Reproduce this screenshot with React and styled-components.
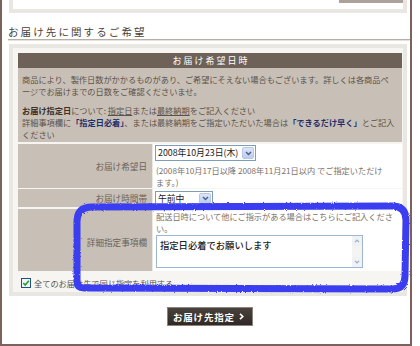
import React from 'react';
import styled, { createGlobalStyle } from 'styled-components';

const GlobalStyle = createGlobalStyle`
  html, body {
    margin: 0;
    padding: 0;
    background: #fff;
  }
  body {
    font-family: "Noto Sans CJK JP", "Noto Sans", sans-serif;
  }
`;

const Page = styled.div`
  position: relative;
  width: 420px;
  height: 346px;
  overflow: hidden;
`;

const Frame = styled.div`
  width: 412px;
  height: 346px;
  box-sizing: border-box;
  border: 2px solid #7b625c;
  border-top: none;
`;

const TopPanel = styled.div`
  margin-left: 7px;
  width: 398px;
  height: 13px;
  box-sizing: border-box;
  border: 4px solid #e9e7e2;
  border-top: none;
  display: flex;
  justify-content: flex-end;
  align-items: flex-start;
`;

const TopButton = styled.div`
  width: 64px;
  height: 3px;
  background: #aaa29b;
`;

const Heading = styled.h2`
  margin: 12px 0 0 6px;
  height: 14px;
  line-height: 14px;
  font-size: 10.5px;
  font-weight: normal;
  letter-spacing: 2.1px;
  color: #4b3f38;
  border-bottom: 1px solid #b7afa6;
  box-shadow: 0 1px 0 #e4e0da;
`;

const Panel = styled.div`
  margin: 4px 0 0 7px;
  width: 398px;
  height: 252px;
  box-sizing: border-box;
  border: 4px solid #e9e7e2;
  background: #f6f5f2;
  padding: 5px 0 0 5px;
`;

const Table = styled.div`
  width: 384px;
`;

const TableHead = styled.div`
  height: 15px;
  background: #6e6158;
  color: #fff;
  font-size: 9px;
  letter-spacing: 2px;
  line-height: 15px;
  text-align: center;
  padding-left: 2px;
`;

const Info = styled.div`
  height: 74px;
  box-sizing: border-box;
  background: #c8c0b6;
  padding: 5px 0 0 4px;
  font-size: 8.2px;
  line-height: 12px;
  color: #5b524b;
  white-space: nowrap;
`;

const Para = styled.p`
  margin: 0 0 ${(p) => p.$gap || 0}px;
`;

const Strong = styled.b`
  color: #3b302a;
`;

const Under = styled.span`
  text-decoration: underline;
  text-underline-offset: 1px;
`;

const Navy = styled.b`
  color: #1f2f6c;
`;

const Row = styled.div`
  display: grid;
  grid-template-columns: 134px 1fr;
  column-gap: 1px;
  margin-top: 2px;
  height: ${(p) => p.$h}px;
  background: #ebe7e1;
`;

const Label = styled.div`
  background: #c8c0b6;
  display: flex;
  justify-content: flex-end;
  align-items: ${(p) => (p.$top ? 'flex-start' : 'center')};
  padding: ${(p) => (p.$top ? `${p.$top}px 5px 0 0` : '0 5px 0 0')};
  font-size: 8.6px;
  color: #6b625a;
  white-space: nowrap;
`;

const Value = styled.div`
  background: #fff;
  padding: ${(p) => p.$pad || '0 0 0 2px'};
  overflow: visible;
`;

const Select = styled.div`
  display: flex;
  align-items: stretch;
  width: ${(p) => p.$w}px;
  height: ${(p) => p.$h}px;
  box-sizing: border-box;
  border: 1px solid #7f9db9;
  background: #fff;
  margin-top: ${(p) => p.$mt || 0}px;
`;

const SelectText = styled.span`
  flex: 1;
  padding-left: 2px;
  font-size: 8.8px;
  line-height: ${(p) => p.$lh}px;
  color: #1a1a1a;
  white-space: nowrap;
`;

const ArrowBox = styled.span`
  width: 12px;
  margin: 1px;
  box-sizing: border-box;
  border: 1px solid #b5c8ea;
  border-radius: 2px;
  background: linear-gradient(#dce6f8, #bccdf0);
  display: flex;
  align-items: center;
  justify-content: center;
`;

const Note = styled.div`
  margin-top: ${(p) => p.$mt || 0}px;
  padding-left: 1px;
  font-size: 8.2px;
  line-height: ${(p) => p.$lh || 12}px;
  color: #7a716a;
  white-space: nowrap;
`;

const TextBox = styled.div`
  display: flex;
  width: 207px;
  height: 33px;
  box-sizing: border-box;
  border: 1px solid #9fb6cf;
  margin: 1px 0 0 1px;
`;

const TextBody = styled.div`
  flex: 1;
  padding: 3px 0 0 3px;
  font-size: 9.3px;
  line-height: 12px;
  font-weight: 500;
  color: #222;
  white-space: nowrap;
`;

const ScrollBar = styled.div`
  width: 10px;
  background: #f4f4f2;
  display: flex;
  flex-direction: column;
  justify-content: space-between;
`;

const ScrollBtn = styled.span`
  height: 10px;
  display: flex;
  align-items: center;
  justify-content: center;
  background: #eef1f5;
`;

const CheckRow = styled.div`
  display: flex;
  align-items: center;
  gap: 3px;
  padding: 7px 0 0 3px;
  height: 10px;
  font-size: 8.2px;
  color: #5b524b;
  white-space: nowrap;
`;

const ButtonRow = styled.div`
  margin: 11px 0 0 16px;
  width: 384px;
  display: flex;
  justify-content: center;
`;

const Button = styled.button`
  width: 86px;
  height: 19px;
  box-sizing: border-box;
  border: 1px solid #8c837c;
  background: linear-gradient(#4a423c, #2f2925);
  color: #fff;
  font-family: inherit;
  font-size: 9.5px;
  font-weight: bold;
  letter-spacing: 0.8px;
  display: flex;
  align-items: center;
  justify-content: space-between;
  padding: 0 8px 0 5px;
  cursor: pointer;
`;

const Overlay = styled.svg`
  position: absolute;
  left: 0;
  top: 0;
  pointer-events: none;
`;

const Chevron = ({ up, color = '#4d6185', w = 7, h = 5 }) => (
  <svg width={w} height={h} viewBox="0 0 7 5">
    <path
      d={up ? 'M1 4 L3.5 1.5 L6 4' : 'M1 1 L3.5 3.5 L6 1'}
      fill="none"
      stroke={color}
      strokeWidth="1.5"
    />
  </svg>
);

const CheckIcon = () => (
  <svg width="10" height="10" viewBox="0 0 10 10">
    <rect x="0.5" y="0.5" width="9" height="9" fill="#f2f4f8" stroke="#1c5180" />
    <path d="M2.3 5 L4.2 7 L7.8 2.8" fill="none" stroke="#21a121" strokeWidth="1.6" />
  </svg>
);

const App = () => (
  <>
    <GlobalStyle />
    <Page>
      <Frame>
        <TopPanel>
          <TopButton />
        </TopPanel>
        <Heading>お届け先に関するご希望</Heading>
        <Panel>
          <Table>
            <TableHead>お届け希望日時</TableHead>
            <Info>
              <Para>商品により、製作日数がかかるものがあり、ご希望にそえない場合もございます。詳しくは各商品ペ</Para>
              <Para $gap={7}>ージでお届けまでの日数をご確認くださいませ。</Para>
              <Para>
                <Strong>お届け指定日</Strong>について: <Under>指定日</Under>または<Under>最終納期</Under>をご記入ください
              </Para>
              <Para>
                詳細事項欄に<Navy>「指定日必着」</Navy>、または最終納期をご指定いただいた場合は<Navy>「できるだけ早く」</Navy>とご記入
              </Para>
              <Para>ください</Para>
            </Info>
            <Row $h={43}>
              <Label>お届け希望日</Label>
              <Value>
                <Select $w={101} $h={16} $mt={1}>
                  <SelectText $lh={14}>2008年10月23日(木)</SelectText>
                  <ArrowBox>
                    <Chevron />
                  </ArrowBox>
                </Select>
                <Note $mt={4} $lh={11.5}>
                  (2008年10月17日以降 2008年11月21日以内 でご指定いただけ
                  <br />
                  ます。)
                </Note>
              </Value>
            </Row>
            <Row $h={18}>
              <Label>お届け時間帯</Label>
              <Value>
                <Select $w={58} $h={15} $mt={2}>
                  <SelectText $lh={13}>午前中</SelectText>
                  <ArrowBox>
                    <Chevron />
                  </ArrowBox>
                </Select>
              </Value>
            </Row>
            <Row $h={62}>
              <Label $top={27}>詳細指定事項欄</Label>
              <Value $pad="1px 0 0 2px">
                <Note>
                  配送日時について他にご指示がある場合はこちらにご記入くださ
                  <br />
                  い。
                </Note>
                <TextBox>
                  <TextBody>指定日必着でお願いします</TextBody>
                  <ScrollBar>
                    <ScrollBtn>
                      <Chevron up color="#a3acbb" w={6} h={4} />
                    </ScrollBtn>
                    <ScrollBtn>
                      <Chevron color="#a3acbb" w={6} h={4} />
                    </ScrollBtn>
                  </ScrollBar>
                </TextBox>
              </Value>
            </Row>
          </Table>
          <CheckRow>
            <CheckIcon />
            全てのお届け先で同じ指定を利用する
          </CheckRow>
        </Panel>
        <ButtonRow>
          <Button type="button">
            <span>お届け先指定</span>
            <svg width="5" height="7" viewBox="0 0 5 7">
              <path d="M1 0.8 L3.8 3.5 L1 6.2" fill="none" stroke="#fff" strokeWidth="1.6" />
            </svg>
          </Button>
        </ButtonRow>
      </Frame>
      <Overlay width="420" height="346" viewBox="0 0 420 346">
        <defs>
          <filter id="crayon" x="-5%" y="-5%" width="110%" height="110%">
            <feTurbulence type="fractalNoise" baseFrequency="0.9" numOctaves="2" result="noise" />
            <feDisplacementMap in="SourceGraphic" in2="noise" scale="2.5" />
          </filter>
        </defs>
        <path
          d="M92 207 L392 206 Q406 206 406 220 L405 276 Q405 289 392 289 L84 288 Q77 288 77 281 L77 222 Q77 207 92 207 Z"
          fill="none"
          stroke="#3a3cf0"
          strokeWidth="7"
          strokeLinejoin="round"
          filter="url(#crayon)"
        />
      </Overlay>
    </Page>
  </>
);

export default App;
